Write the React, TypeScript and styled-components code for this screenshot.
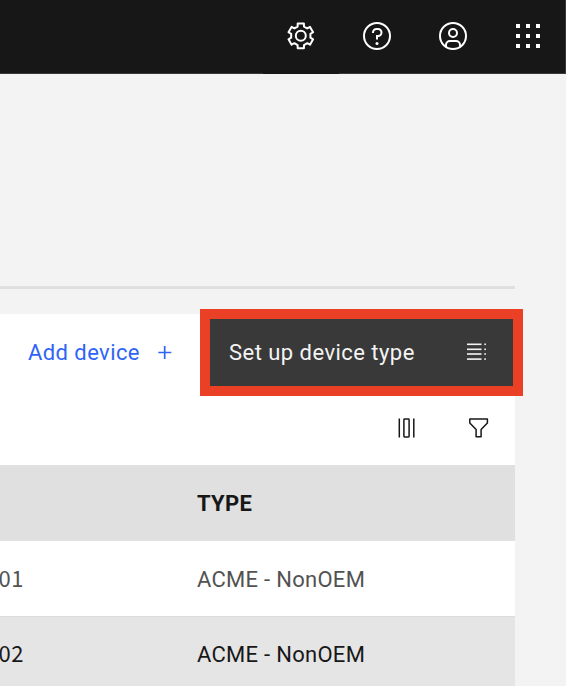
import React from "react";
import styled, { createGlobalStyle } from "styled-components";

const GlobalStyle = createGlobalStyle`
  *, *::before, *::after { box-sizing: border-box; }
  body {
    margin: 0;
    overflow: hidden;
    background: #f3f3f3;
    font-family: Roboto, "Liberation Sans", sans-serif;
  }
  svg { display: block; flex: none; }
`;

const Page = styled.div`
  width: 566px;
  height: 686px;
  overflow: hidden;
  background: #f3f3f3;
`;

const Header = styled.header`
  height: 74px;
  display: flex;
  justify-content: flex-end;
  background: #171717;
  border-right: 1px solid #393939;
`;

const HeaderFill = styled.div`
  flex: 1;
  border-bottom: 1px solid #393939;
`;

const HeaderAction = styled.button<{ $active?: boolean; $width?: number }>`
  flex: none;
  width: ${(p) => p.$width ?? 76}px;
  height: 74px;
  padding: 0 0 2px;
  display: flex;
  align-items: center;
  justify-content: center;
  color: #fff;
  background: #171717;
  border: 0;
  border-bottom: 1px solid ${(p) => (p.$active ? "#171717" : "#393939")};
`;

const PageTitle = styled.div`
  width: 515px;
  height: 215px;
  border-bottom: 3px solid #dfdfdf;
`;

const Panel = styled.main`
  width: 515px;
  margin-top: 25px;
  background: #fff;
`;

const ActionBar = styled.div`
  height: 76px;
  display: flex;
  justify-content: flex-end;
`;

const AddButton = styled.button`
  display: flex;
  align-items: center;
  width: 172px;
  gap: 17px;
  padding: 1px 0 0 28px;
  margin-right: 28px;
  border: 0;
  background: none;
  color: #2f65f5;
  font: 400 22px/28px Roboto, sans-serif;
  letter-spacing: 0.42px;
  white-space: nowrap;
`;

const Highlight = styled.div`
  flex: none;
  width: 323px;
  height: 87px;
  margin: -5px -8px 0 0;
  padding: 10px;
  background: #ea4025;
`;

const SetupButton = styled.button`
  width: 303px;
  height: 67px;
  display: flex;
  align-items: center;
  justify-content: space-between;
  padding: 0 25px 0 19px;
  border: 0;
  background: #393939;
  color: #f4f4f4;
  font: 400 22px/28px Roboto, sans-serif;
  letter-spacing: 0.46px;
`;

const Tools = styled.div`
  height: 75px;
  display: flex;
  align-items: center;
  justify-content: flex-end;
  gap: 48px;
  padding-right: 24px;
  color: #171717;
`;

const Row = styled.div<{ $kind: "head" | "plain" | "hover" }>`
  display: grid;
  grid-template-columns: 197px 1fr;
  align-items: center;
  height: ${(p) => (p.$kind === "head" ? 76 : 75)}px;
  background: ${(p) => ({ head: "#e0e0e0", plain: "#fff", hover: "#e5e5e5" })[p.$kind]};
  color: ${(p) => (p.$kind === "plain" ? "#525252" : "#171717")};
  border-top: ${(p) => (p.$kind === "hover" ? "1px solid #dcdcdc" : "0")};
  font-size: 22px;
  line-height: 28px;
`;

const IdCell = styled.div`
  width: 24px;
  display: flex;
  justify-content: flex-end;
  padding-bottom: 4px;
  font-family: "Noto Sans CJK SC", sans-serif;
  letter-spacing: 0.6px;
`;

const TypeCell = styled.div`
  padding-top: 2px;
  letter-spacing: 0.28px;
  white-space: pre;
`;

const HeadCell = styled(TypeCell)`
  font-weight: 700;
  letter-spacing: 0.3px;
`;

// Six teeth, each described by two base corners and two tip corners.
const gearPoints = [0, 60, 120, 180, 240, 300]
  .flatMap((tooth) =>
    [[-19, 9.8], [-14, 12.8], [14, 12.8], [19, 9.8]].map(([offset, radius]) => {
      const angle = ((tooth + offset) * Math.PI) / 180;
      return `${(16 + radius * Math.sin(angle)).toFixed(2)},${(16 - radius * Math.cos(angle)).toFixed(2)}`;
    })
  )
  .join(" ");

const GearIcon = () => (
  <svg width="32" height="32" viewBox="0.2 0.2 32 32" fill="none" stroke="currentColor" strokeWidth="2" strokeLinejoin="round">
    <polygon points={gearPoints} />
    <circle cx="16" cy="16" r="5" />
  </svg>
);

const HelpIcon = () => (
  <svg width="32" height="32" viewBox="0 0 32 32" fill="none" stroke="currentColor" strokeWidth="2">
    <circle cx="16" cy="16" r="13" />
    <path d="M12 13v-.5A3.5 3.5 0 0 1 15.500 9H17a3.500 3.500 0 0 1 0 7h-1v3.500" />
    <circle cx="16" cy="23.500" r="1.500" fill="currentColor" stroke="none" />
  </svg>
);

const UserIcon = () => (
  <svg width="32" height="32" viewBox="0 0 32 32" fill="none" stroke="currentColor" strokeWidth="2">
    <circle cx="16" cy="16" r="13" />
    <circle cx="16" cy="13" r="4" />
    <path d="M9 26.700V25a4 4 0 0 1 4-4h6a4 4 0 0 1 4 4v1.700" />
  </svg>
);

const SwitcherIcon = () => (
  <svg width="32" height="32" viewBox="0 0 32 32" fill="currentColor">
    {[4, 14, 24].map((y) => [4, 14, 24].map((x) => <rect key={`${x}-${y}`} x={x} y={y} width="4" height="4" />))}
  </svg>
);

const PlusIcon = () => (
  <svg width="16" height="28" viewBox="0 0 16 28" stroke="currentColor" strokeWidth="1.700">
    <path d="M1.300 13.500h13M7.700 7v13" />
  </svg>
);

const ListIcon = () => (
  <svg width="22" height="22" viewBox="0 0 22 22" fill="currentColor">
    {[1.500, 6.500, 11.200, 16.300].map((y) => (
      <g key={y}>
        <rect x="1" y={y} width="14.500" height="1.600" />
        <rect x="18.300" y={y} width="1.600" height="1.600" />
      </g>
    ))}
  </svg>
);

const ColumnsIcon = () => (
  <svg width="24" height="24" viewBox="0 0 24 24" fill="none" stroke="currentColor" strokeWidth="1.500">
    <path d="M4.300 2.500v19M18.800 2.500v19" />
    <rect x="8.900" y="3.100" width="5.200" height="17.800" rx=".7" />
  </svg>
);

const FilterIcon = () => (
  <svg width="24" height="24" viewBox="0 0 24 24" fill="none" stroke="currentColor" strokeWidth="1.500" strokeLinejoin="round">
    <path d="M2.800 3.100h17.600v3.900l-6.300 6.500v7.200h-5v-7.200L2.800 7z" />
  </svg>
);

export default function App() {
  return (
    <Page>
      <GlobalStyle />
      <Header>
        <HeaderFill />
        <HeaderAction $active aria-label="Settings"><GearIcon /></HeaderAction>
        <HeaderAction aria-label="Help"><HelpIcon /></HeaderAction>
        <HeaderAction aria-label="Account"><UserIcon /></HeaderAction>
        <HeaderAction $width={74} aria-label="Applications"><SwitcherIcon /></HeaderAction>
      </Header>
      <PageTitle />
      <Panel>
        <ActionBar>
          <AddButton>Add device<PlusIcon /></AddButton>
          <Highlight>
            <SetupButton>Set up device type<ListIcon /></SetupButton>
          </Highlight>
        </ActionBar>
        <Tools>
          <ColumnsIcon />
          <FilterIcon />
        </Tools>
        <Row $kind="head"><IdCell /><HeadCell>TYPE</HeadCell></Row>
        <Row $kind="plain"><IdCell>01</IdCell><TypeCell>ACME - NonOEM</TypeCell></Row>
        <Row $kind="hover"><IdCell>02</IdCell><TypeCell>ACME - NonOEM</TypeCell></Row>
      </Panel>
    </Page>
  );
}
